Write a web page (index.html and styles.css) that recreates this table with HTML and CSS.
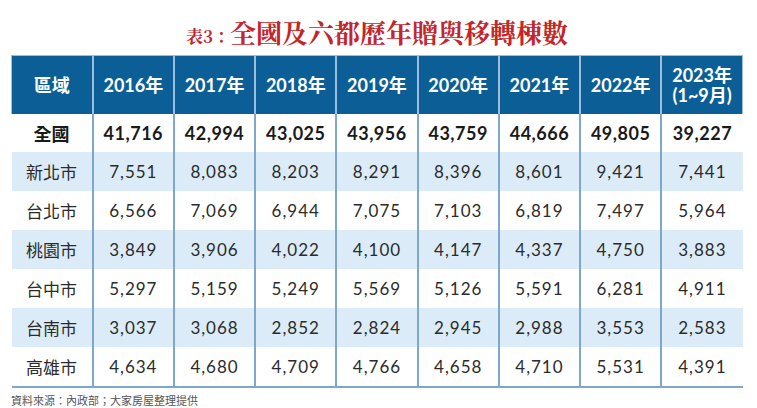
FILE: index.html
```html
<!DOCTYPE html>
<html lang="zh-Hant">
<head>
<meta charset="utf-8">
<link rel="stylesheet" href="styles.css">
</head>
<body>
<div class="page">
  <h1 class="title"><span class="tag">表3：</span><span class="main">全國及六都歷年贈與移轉棟數</span></h1>
  <table class="data">
    <thead>
      <tr>
        <th>區域</th><th>2016年</th><th>2017年</th><th>2018年</th><th>2019年</th><th>2020年</th><th>2021年</th><th>2022年</th><th class="two">2023年<br>(1~9月)</th>
      </tr>
    </thead>
    <tbody>
      <tr class="total"><td>全國</td><td>41,716</td><td>42,994</td><td>43,025</td><td>43,956</td><td>43,759</td><td>44,666</td><td>49,805</td><td>39,227</td></tr>
      <tr class="alt"><td>新北市</td><td>7,551</td><td>8,083</td><td>8,203</td><td>8,291</td><td>8,396</td><td>8,601</td><td>9,421</td><td>7,441</td></tr>
      <tr><td>台北市</td><td>6,566</td><td>7,069</td><td>6,944</td><td>7,075</td><td>7,103</td><td>6,819</td><td>7,497</td><td>5,964</td></tr>
      <tr class="alt"><td>桃園市</td><td>3,849</td><td>3,906</td><td>4,022</td><td>4,100</td><td>4,147</td><td>4,337</td><td>4,750</td><td>3,883</td></tr>
      <tr><td>台中市</td><td>5,297</td><td>5,159</td><td>5,249</td><td>5,569</td><td>5,126</td><td>5,591</td><td>6,281</td><td>4,911</td></tr>
      <tr class="alt"><td>台南市</td><td>3,037</td><td>3,068</td><td>2,852</td><td>2,824</td><td>2,945</td><td>2,988</td><td>3,553</td><td>2,583</td></tr>
      <tr class="last"><td>高雄市</td><td>4,634</td><td>4,680</td><td>4,709</td><td>4,766</td><td>4,658</td><td>4,710</td><td>5,531</td><td>4,391</td></tr>
    </tbody>
  </table>
  <p class="source">資料來源：內政部；大家房屋整理提供</p>
</div>
</body>
</html>
```

FILE: styles.css
```css
html, body {
  margin: 0;
  padding: 0;
  background: #ffffff;
}

.page {
  width: 732px;
  padding: 16px 0 0 11px;
  font-family: "Lato", "Noto Sans CJK TC", sans-serif;
}

.title {
  display: flex;
  justify-content: center;
  align-items: baseline;
  height: 31px;
  margin: 0 0 8px 0;
  font-family: "Noto Serif CJK TC", "Liberation Serif", "Noto Sans CJK TC", serif;
  font-weight: 700;
  line-height: 31px;
  color: #c4252c;
  overflow: visible;
}

.title .tag {
  font-size: 17px;
  line-height: 31px;
}

.title .main {
  font-size: 26px;
  line-height: 31px;
}

.data {
  width: 732px;
  table-layout: fixed;
  border-collapse: collapse;
}

.data th {
  height: 58px;
  padding: 0;
  background: #0c5f96;
  color: #ffffff;
  font-size: 18px;
  font-weight: 700;
  line-height: 20px;
  text-align: center;
  border-left: 2px solid #9dbddb;
  border-right: 2px solid #9dbddb;
  border-top: 1px solid #9dbddb;
}

.data th:first-child {
  border-left: 1px solid #9dbddb;
}

.data th:last-child {
  border-right: 1px solid #9dbddb;
}

.data td {
  height: 39px;
  padding: 0;
  text-align: center;
  font-size: 17px;
  letter-spacing: 1px;
  color: #2b2b2b;
  border-left: 2px solid #7ea7cc;
  border-right: 2px solid #7ea7cc;
}

.data td:first-child {
  border-left: none;
  letter-spacing: 0;
}

.data td:last-child {
  border-right: none;
}

.data tr.total td {
  height: 38px;
  font-weight: 700;
  font-size: 18px;
  letter-spacing: 0.5px;
  color: #1a1a1a;
}

.data tr.total td:first-child {
  letter-spacing: 0;
}

.data tr.alt td {
  background: #dcebf8;
}

.data tr.last td {
  border-bottom: 2px solid #7ea7cc;
}

.source {
  margin: 5px 0 0 0;
  font-family: "Noto Sans CJK TC", sans-serif;
  font-size: 11px;
  line-height: 14px;
  color: #555555;
}
```
